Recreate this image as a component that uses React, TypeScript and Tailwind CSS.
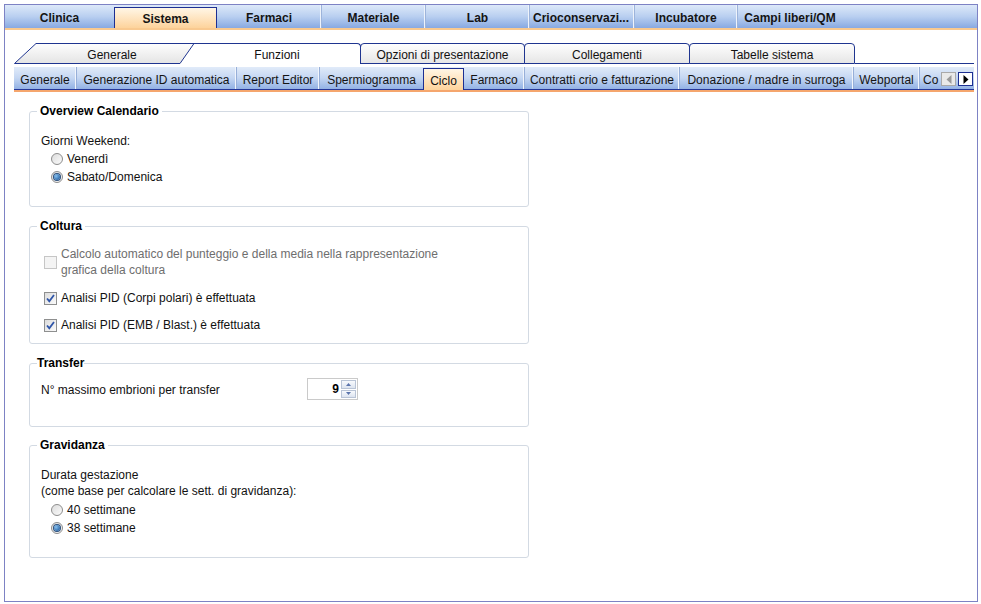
import clsx from "clsx";
import type { ReactNode } from "react";

type TopTab = { label: string; w: string; active?: boolean; sep?: boolean; left?: boolean };

const TOP_TABS: TopTab[] = [
  { label: "Clinica", w: "w-[109px]" },
  { label: "Sistema", w: "w-[103px]", active: true },
  { label: "Farmaci", w: "w-[105px]", sep: true },
  { label: "Materiale", w: "w-[104px]", sep: true },
  { label: "Lab", w: "w-[104px]", sep: true },
  { label: "Crioconservazi...", w: "w-[105px]", sep: true, left: true },
  { label: "Incubatore", w: "w-[103px]", sep: true },
  { label: "Campi liberi/QM", w: "w-[104px]" },
];

type SubTab = { label: string; w: string; active?: boolean; sep?: boolean };

const SUB_TABS: SubTab[] = [
  { label: "Generale", w: "w-[63px]", sep: true },
  { label: "Generazione ID automatica", w: "w-[160px]", sep: true },
  { label: "Report Editor", w: "w-[83px]", sep: true },
  { label: "Spermiogramma", w: "w-[103px]" },
  { label: "Ciclo", w: "w-[41px]", active: true },
  { label: "Farmaco", w: "w-[61px]", sep: true },
  { label: "Contratti crio e fatturazione", w: "w-[155px]", sep: true },
  { label: "Donazione / madre in surroga", w: "w-[174px]", sep: true },
  { label: "Webportal", w: "w-[66px]", sep: true },
];

const SECTION_TABS = [
  { label: "Opzioni di presentazione", w: "w-[165px]" },
  { label: "Collegamenti", w: "w-[166px]" },
  { label: "Tabelle sistema", w: "w-[166px]" },
];

const TopBar = () => (
  <>
    <div className="flex h-[23px] bg-linear-to-b from-[#dde9f9] via-[#b9cff0] to-[#88a9e1]">
      {TOP_TABS.map((t) =>
        t.active ? (
          <div
            key={t.label}
            className={clsx(
              "mt-[2px] flex items-center justify-center border-x border-t border-[#1d2f92] bg-linear-to-b from-[#fff6e6] to-[#fdd39b] pt-[1px] font-bold text-[#141414]",
              t.w
            )}
          >
            {t.label}
          </div>
        ) : (
          <div
            key={t.label}
            className={clsx(
              "flex items-center whitespace-nowrap pt-[3px] font-bold text-[#141414]",
              t.w,
              t.left ? "justify-start pl-[3px]" : "justify-center",
              t.sep && "border-r border-[#9db4db] shadow-[inset_-1px_0_0_#eef3fb]"
            )}
          >
            {t.label}
          </div>
        )
      )}
    </div>
    <div className="h-[2px] bg-[#f9c98f]" />
  </>
);

const SectionTabs = () => (
  <div className="mt-[13px] mr-[3px] ml-[9px] flex h-[21px]">
    {/* slanted first tab */}
    <div className="relative flex w-[180px] items-center justify-center pt-[2px] pl-[16px]">
      <svg className="absolute inset-0" width="180" height="21" viewBox="0 0 180 21">
        <defs>
          <linearGradient id="tabGrey" x1="0" y1="0" x2="0" y2="1">
            <stop offset="0" stopColor="#fefefe" />
            <stop offset="1" stopColor="#e4e4e4" />
          </linearGradient>
        </defs>
        <polygon
          points="0.5,20.5 22,0.5 180,0.5 166,20.5"
          fill="url(#tabGrey)"
          stroke="#1f3590"
          strokeWidth="1"
        />
      </svg>
      <span className="relative">Generale</span>
    </div>
    <div className="flex w-[167px] items-center justify-center rounded-tr-[4px] border-t border-r border-[#1f3590] bg-white pt-[2px]">
      Funzioni
    </div>
    {SECTION_TABS.map((t) => (
      <div
        key={t.label}
        className={clsx(
          "-ml-px flex items-center justify-center rounded-t-[4px] border border-[#1f3590] bg-linear-to-b from-[#fefefe] to-[#e6e6e6] pt-[2px]",
          t.w
        )}
      >
        {t.label}
      </div>
    ))}
    <div className="flex-1 border-b border-[#1f3590]" />
  </div>
);

const Arrow = ({ dir, enabled }: { dir: "left" | "right"; enabled?: boolean }) => (
  <div
    className={clsx(
      "flex h-[14px] w-[15px] items-center justify-center border",
      enabled ? "border-[#1d2f92] bg-white" : "border-[#a9a9a9] bg-[#e9e9e9]"
    )}
  >
    <svg width="6" height="9" viewBox="0 0 6 9">
      <polygon
        points={dir === "left" ? "5.5,0 5.5,9 0.5,4.5" : "0.5,0 0.5,9 5.5,4.5"}
        fill={enabled ? "#000" : "#9a9a9a"}
      />
    </svg>
  </div>
);

const SubTabs = () => (
  <div className="mt-[3px] mr-[3px] ml-[9px]">
    <div className="flex h-[22px] bg-linear-to-b from-[#e1ebf9] via-[#c4d6f2] to-[#93b2e4]">
      {SUB_TABS.map((t) =>
        t.active ? (
          <div
            key={t.label}
            className={clsx(
              "mt-[1px] -mb-[1px] flex items-center justify-center border-x border-t border-[#1d2f92] bg-linear-to-b from-[#fff6e6] to-[#fdd39b] pt-[3px]",
              t.w
            )}
          >
            {t.label}
          </div>
        ) : (
          <div
            key={t.label}
            className={clsx(
              "flex items-center justify-center whitespace-nowrap pt-[4px] text-[#141414]",
              t.w,
              t.sep && "border-r border-[#97afd8] shadow-[inset_-1px_0_0_#f1f5fc]"
            )}
          >
            {t.label}
          </div>
        )
      )}
      <div className="flex w-[20px] items-center overflow-hidden whitespace-nowrap pt-[4px] pl-[3px] text-[#141414]">
        Co
      </div>
      <div className="flex flex-1 items-center justify-end gap-[2px] pt-[2px] pr-[1px]">
        <Arrow dir="left" />
        <Arrow dir="right" enabled />
      </div>
    </div>
    <div className="h-[1px] bg-[#26389a]" />
    <div className="h-[2px] bg-[#f5a66d]" />
  </div>
);

const Radio = ({ checked }: { checked?: boolean }) => (
  <span className="flex h-[12px] w-[12px] items-center justify-center rounded-full border border-[#8d8d8d] bg-linear-to-br from-[#dcdcdc] to-[#fbfbfb]">
    {checked && (
      <span className="h-[6px] w-[6px] rounded-full bg-[radial-gradient(circle_at_35%_35%,#86c0ef,#0d4b92)] shadow-[0_0_0_1px_#2b4f7c]" />
    )}
  </span>
);

const Check = ({ checked, disabled }: { checked?: boolean; disabled?: boolean }) => (
  <span
    className={clsx(
      "flex h-[13px] w-[13px] shrink-0 items-center justify-center border",
      disabled ? "border-[#c6c6c6] bg-[#f4f4f4]" : "border-[#8e8f8f] bg-linear-to-br from-[#dcdcdc] to-[#fbfbfb]"
    )}
  >
    {checked && (
      <svg width="11" height="11" viewBox="0 0 11 11">
        <path d="M2 5.5 L4.3 8.2 L9 2" stroke="#2f55a8" strokeWidth="1.8" fill="none" />
      </svg>
    )}
  </span>
);

const RadioRow = ({ label, checked }: { label: string; checked?: boolean }) => (
  <div className="flex h-[18px] items-center gap-[4px] pl-[10px]">
    <Radio checked={checked} />
    <span>{label}</span>
  </div>
);

const Group = ({
  title,
  className,
  tight,
  children,
}: {
  title: string;
  className: string;
  tight?: boolean;
  children: ReactNode;
}) => (
  <fieldset className={clsx("w-[500px] rounded-[3px] border border-[#d3dae3] px-[11px]", className)}>
    <legend className={clsx("ml-[-4px] leading-[14px] font-bold text-black", tight ? "px-0" : "px-[3px]")}>
      {title}
    </legend>
    {children}
  </fieldset>
);

const SpinButton = ({ up }: { up?: boolean }) => (
  <div className="flex flex-1 items-center justify-center border border-[#b9c4d6] bg-linear-to-b from-[#f8fafd] to-[#dde4ef]">
    <svg width="5" height="3" viewBox="0 0 5 3">
      <polygon points={up ? "0,3 5,3 2.5,0" : "0,0 5,0 2.5,3"} fill="#5b74ac" />
    </svg>
  </div>
);

export default function App() {
  return (
    <div className="h-[604px] w-[981px] bg-white pt-[4px] pl-[4px] font-['Liberation_Sans',Arial,sans-serif] text-[12px] text-[#111]">
      <div className="flex h-[598px] w-[974px] flex-col border border-[#7d82c4]">
        <TopBar />
        <SectionTabs />
        <SubTabs />

        <div className="flex flex-col pt-[12px] pl-[24px]">
          <Group title="Overview Calendario" className="h-[103px]">
            <div className="mt-[16px] leading-[14px]">Giorni Weekend:</div>
            <div className="mt-[2px]">
              <RadioRow label="Venerdì" />
              <RadioRow label="Sabato/Domenica" checked />
            </div>
          </Group>

          <Group title="Coltura" className="mt-[12px] h-[125px]">
            <div className="mt-[13px] flex items-center gap-[4px] pl-[3px] leading-[16px] text-[#6e6e6e]">
              <Check disabled />
              <span>
                Calcolo automatico del punteggio e della media nella rappresentazione
                <br />
                grafica della coltura
              </span>
            </div>
            <div className="mt-[12px] flex h-[16px] items-center gap-[4px] pl-[3px]">
              <Check checked />
              <span>Analisi PID (Corpi polari) è effettuata</span>
            </div>
            <div className="mt-[11px] flex h-[16px] items-center gap-[4px] pl-[3px]">
              <Check checked />
              <span>Analisi PID (EMB / Blast.) è effettuata</span>
            </div>
          </Group>

          <Group title="Transfer" className="mt-[12px] h-[71px]" tight>
            <div className="mt-[8px] flex h-[22px] items-center">
              <span className="w-[266px] pt-[1px]">N° massimo embrioni per transfer</span>
              <div className="flex h-[22px] w-[51px] border border-[#cacaca] bg-white">
                <span className="flex flex-1 items-center justify-end pr-[2px] font-bold text-black">9</span>
                <div className="flex w-[16px] flex-col gap-px py-px pr-px">
                  <SpinButton up />
                  <SpinButton />
                </div>
              </div>
            </div>
          </Group>

          <Group title="Gravidanza" className="mt-[11px] h-[120px]">
            <div className="mt-[15px] leading-[16px]">
              Durata gestazione
              <br />
              (come base per calcolare le sett. di gravidanza):
            </div>
            <div className="mt-[2px]">
              <RadioRow label="40 settimane" />
              <RadioRow label="38 settimane" checked />
            </div>
          </Group>
        </div>
      </div>
    </div>
  );
}
